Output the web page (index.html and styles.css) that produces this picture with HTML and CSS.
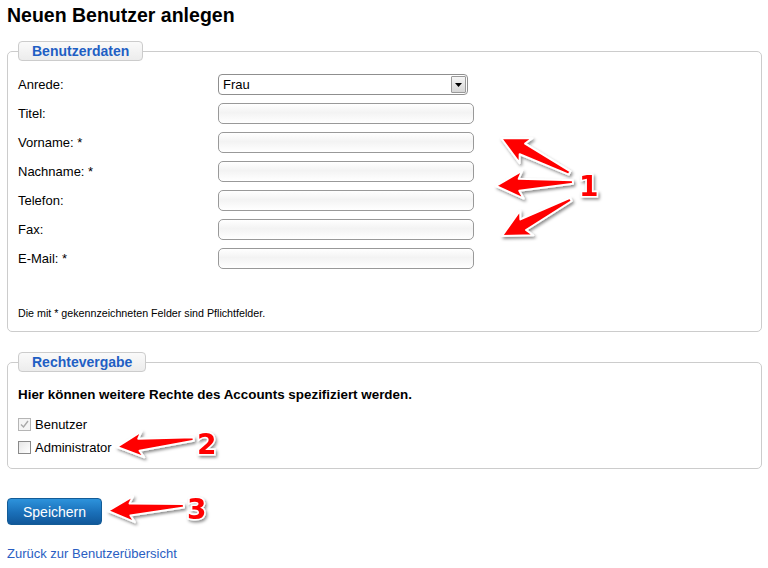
FILE: index.html
```html
<!DOCTYPE html>
<html lang="de">
<head>
<meta charset="utf-8">
<title>Neuen Benutzer anlegen</title>
<link rel="stylesheet" href="styles.css">
</head>
<body>
<h1 class="page-title">Neuen Benutzer anlegen</h1>

<form class="user-form">
  <fieldset class="box box-data">
    <legend class="box-legend">Benutzerdaten</legend>
    <div class="form-grid">
      <label class="field-label" for="anrede">Anrede:</label>
      <div class="select-wrap">
        <select id="anrede" class="select"><option>Frau</option><option>Herr</option></select>
        <span class="select-btn"><svg width="7" height="4" viewBox="0 0 7 4"><path d="M0 0H7L3.5 4Z" fill="#000"/></svg></span>
      </div>
      <label class="field-label" for="titel">Titel:</label>
      <input id="titel" class="text-input" type="text">
      <label class="field-label" for="vorname">Vorname: *</label>
      <input id="vorname" class="text-input" type="text">
      <label class="field-label" for="nachname">Nachname: *</label>
      <input id="nachname" class="text-input" type="text">
      <label class="field-label" for="telefon">Telefon:</label>
      <input id="telefon" class="text-input" type="text">
      <label class="field-label" for="fax">Fax:</label>
      <input id="fax" class="text-input" type="text">
      <label class="field-label" for="email">E-Mail: *</label>
      <input id="email" class="text-input" type="text">
    </div>
    <p class="hint">Die mit * gekennzeichneten Felder sind Pflichtfelder.</p>
  </fieldset>

  <fieldset class="box box-rights">
    <legend class="box-legend">Rechtevergabe</legend>
    <p class="rights-intro">Hier können weitere Rechte des Accounts spezifiziert werden.</p>
    <div class="check-list">
      <label class="check-row">
        <span class="check-box is-disabled"><svg width="9" height="9" viewBox="0 0 9 9"><path d="M1 4.5L3.5 7L8 1" fill="none" stroke="#a8a8a8" stroke-width="1.4"/></svg></span>
        <span class="check-text">Benutzer</span>
      </label>
      <label class="check-row">
        <span class="check-box"></span>
        <span class="check-text">Administrator</span>
      </label>
    </div>
  </fieldset>

  <div class="actions">
    <button type="button" class="btn-save">Speichern</button>
  </div>
</form>

<a class="back-link" href="#">Zurück zur Benutzerübersicht</a>

<svg class="annotations" width="768" height="568" viewBox="0 0 768 568">
  <defs>
    <filter id="shadow" x="-20%" y="-40%" width="140%" height="180%">
      <feDropShadow dx="1.5" dy="2" stdDeviation="1.5" flood-color="#000" flood-opacity="0.45"/>
    </filter>
  </defs>
  <g filter="url(#shadow)" fill="#ff0000" stroke="#ffffff" stroke-width="2" stroke-linejoin="round">
    <path transform="translate(501,138) rotate(27)" d="M0 0L28 -14L24 -6L77 -1.8L77 1.8L24 6L28 14Z"/>
    <path transform="translate(496,186) rotate(-3)" d="M0 0L27 -14L23 -6L77 -1.8L77 1.8L23 6L27 14Z"/>
    <path transform="translate(502,236) rotate(-28)" d="M0 0L28 -14L24 -6L78 -1.8L78 1.8L24 6L28 14Z"/>
    <path transform="translate(117,447) rotate(-6)" d="M0 0L26 -13L22 -6L77 -1.8L77 1.8L22 6L26 13Z"/>
    <path transform="translate(108,511) rotate(-4)" d="M0 0L26 -13L22 -6L76 -1.8L76 1.8L22 6L26 13Z"/>
  </g>
  <g class="num" filter="url(#shadow)">
    <text x="579" y="196">1</text>
    <text x="197" y="454">2</text>
    <text x="187" y="519">3</text>
  </g>
</svg>
</body>
</html>
```

FILE: styles.css
```css
html, body {
  margin: 0;
  padding: 0;
  background: #ffffff;
}

body {
  position: relative;
  font-family: "Liberation Sans", Arial, sans-serif;
  font-size: 12px;
  color: #000;
  padding: 0 6px 0 7px;
  width: 755px;
}

.page-title {
  margin: 0;
  padding-top: 4px;
  font-size: 19.5px;
  line-height: 23px;
  font-weight: bold;
  color: #000;
}

.user-form {
  margin: 0;
}

.box {
  margin: 0;
  border: 1px solid #cccccc;
  border-radius: 5px;
  padding: 0 10px;
  min-width: 0;
}

.box-data {
  margin-top: 14px;
  padding-top: 13px;
  padding-bottom: 0;
}

.box-rights {
  margin-top: 20px;
  padding-top: 15px;
  padding-bottom: 13px;
}

.box-legend {
  padding: 0 13px;
  height: 18px;
  line-height: 18px;
  border: 1px solid #cccccc;
  border-radius: 4px;
  background: linear-gradient(#fafafa, #ececec);
  color: #1f5fc4;
  font-size: 14px;
  font-weight: bold;
}

.form-grid {
  display: grid;
  grid-template-columns: 200px 256px;
  grid-auto-rows: 21px;
  row-gap: 8px;
  align-items: center;
}

.field-label {
  font-size: 13px;
  line-height: 15px;
}

.select-wrap {
  position: relative;
  width: 250px;
  height: 21px;
}

.select {
  -webkit-appearance: none;
  appearance: none;
  box-sizing: border-box;
  width: 250px;
  height: 21px;
  margin: 0;
  padding: 0 0 0 4px;
  border: 1px solid #8f8f8f;
  border-radius: 4px;
  background: #fff;
  font-family: "Liberation Sans", Arial, sans-serif;
  font-size: 13px;
  color: #000;
}

.select-btn {
  position: absolute;
  top: 2px;
  right: 2px;
  width: 15px;
  height: 17px;
  box-sizing: border-box;
  border: 1px solid #9a9a9a;
  border-radius: 1px;
  background: linear-gradient(#f6f6f6, #d6d6d6);
  display: flex;
  align-items: center;
  justify-content: center;
}

.text-input {
  box-sizing: border-box;
  width: 256px;
  height: 21px;
  margin: 0;
  padding: 0 4px;
  border: 1px solid #999999;
  border-radius: 5px;
  background: linear-gradient(#ffffff, #f3f3f3 45%, #ffffff);
  font-family: "Liberation Sans", Arial, sans-serif;
  font-size: 12px;
}

.hint {
  margin: 38px 0 0;
  padding-bottom: 11px;
  font-size: 10.7px;
  line-height: 13px;
}

.rights-intro {
  margin: 0;
  font-size: 13.4px;
  font-weight: bold;
  line-height: 16px;
}

.check-list {
  margin-top: 13px;
  display: flex;
  flex-direction: column;
  gap: 7px;
}

.check-row {
  display: flex;
  align-items: center;
  gap: 4px;
  height: 16px;
  font-size: 13px;
}

.check-box {
  box-sizing: border-box;
  width: 13px;
  height: 13px;
  border: 1px solid #8a8a8a;
  background: linear-gradient(135deg, #e6e6e6, #ffffff);
  display: flex;
  align-items: center;
  justify-content: center;
}

.check-box.is-disabled {
  border-color: #b5b5b5;
  background: #f4f4f4;
}

.check-text {
  font-size: 13px;
}

.actions {
  margin-top: 29px;
}

.btn-save {
  box-sizing: border-box;
  width: 95px;
  height: 27px;
  margin: 0;
  padding: 0;
  border: 1px solid #135c97;
  border-radius: 4px;
  background: linear-gradient(#2d93dc, #1a6fb8 55%, #11589a);
  color: #ffffff;
  font-family: "Liberation Sans", Arial, sans-serif;
  font-size: 14px;
  cursor: pointer;
}

.back-link {
  display: inline-block;
  margin-top: 21px;
  font-size: 13px;
  line-height: 15px;
  color: #2a5ec2;
  text-decoration: none;
}

.annotations {
  position: absolute;
  left: 0;
  top: 0;
  pointer-events: none;
}

.num text {
  font-family: "DejaVu Sans", "Liberation Sans", sans-serif;
  font-weight: bold;
  font-size: 28px;
  fill: #ff0000;
  stroke: #ffffff;
  stroke-width: 3px;
  paint-order: stroke;
}
```
